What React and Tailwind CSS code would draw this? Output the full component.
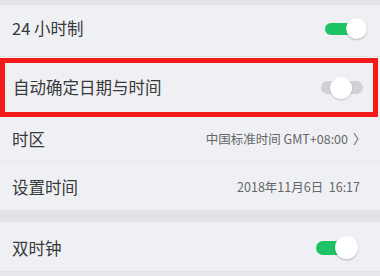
export default function App() {
  const font = { fontFamily: '"Noto Sans CJK SC", "Noto Sans", sans-serif' };
  return (
    <div className="w-[380px] h-[276px] overflow-hidden bg-[#eef0f4] flex flex-col" style={font}>
      <div className="h-[5px] bg-[#e2e4e8]" />
      {/* Row 1 */}
      <div className="h-[52px] flex items-center justify-between pl-[12px] pr-[13px] pb-[4px] border-b border-[#e4e6ea]">
        <span className="text-[16.5px] text-[#383838]">24 小时制</span>
        <div className="relative w-[42px] h-[22px] flex items-center">
          <div className="w-[30px] h-[12px] rounded-full bg-[#1ec463]" />
          <div className="absolute right-0 top-0 w-[21px] h-[21px] rounded-full bg-white shadow-[0_1px_2px_rgba(0,0,0,0.25)]" />
        </div>
      </div>
      {/* Row 2 highlighted */}
      <div className="h-[59px] mt-[1px] flex items-center justify-between pl-[8px] pr-[10px] border-[5px] border-[#f41a1a] mr-[2px]">
        <span className="text-[16.5px] text-[#383838]">自动确定日期与时间</span>
        <div className="relative w-[42px] h-[22px] flex items-center">
          <div className="w-[42px] h-[13px] rounded-full bg-[#cfd1d5]" />
          <div className="absolute left-[9px] top-0 w-[22px] h-[22px] rounded-full bg-white shadow-[0_1px_2px_rgba(0,0,0,0.2)]" />
        </div>
      </div>
      {/* Row 3 */}
      <div className="h-[45px] flex items-center justify-between pl-[12px] pr-[14px] border-b border-[#e6e8ec]">
        <span className="text-[16.5px] text-[#383838]">时区</span>
        <span className="text-[12.5px] text-[#666] flex items-center gap-[5px]">
          中国标准时间 GMT+08:00
          <span className="text-[13px]">〉</span>
        </span>
      </div>
      {/* Row 4 */}
      <div className="h-[48px] flex items-center justify-between pl-[12px] pr-[20px] pt-[3px]">
        <span className="text-[16.5px] text-[#383838]">设置时间</span>
        <span className="text-[12.5px] text-[#666]">2018年11月6日&nbsp;&nbsp;16:17</span>
      </div>
      <div className="h-[12px] bg-[#e2e4e8]" />
      {/* Row 5 */}
      <div className="h-[50px] flex items-center justify-between pl-[12px] pr-[22px] pt-[3px] border-b border-[#e0e2e6]">
        <span className="text-[16.5px] text-[#383838]">双时钟</span>
        <div className="relative w-[42px] h-[24px] flex items-center">
          <div className="w-[28px] h-[14px] rounded-full bg-[#1ec463]" />
          <div className="absolute right-0 top-0 w-[23px] h-[23px] rounded-full bg-white shadow-[0_1px_2px_rgba(0,0,0,0.25)]" />
        </div>
      </div>
      <div className="flex-1 bg-[#e6e8ec]" />
    </div>
  );
}
